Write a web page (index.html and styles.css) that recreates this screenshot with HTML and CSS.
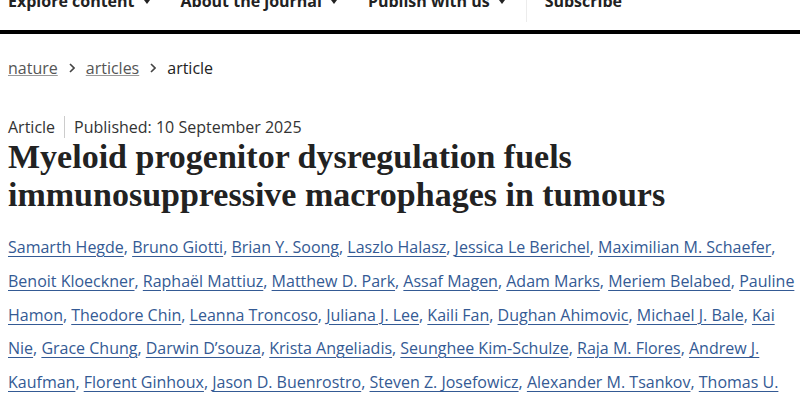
FILE: index.html
```html
<!DOCTYPE html>
<html lang="en">
<head>
    <meta charset="UTF-8">
    <meta name="viewport" content="width=device-width, initial-scale=1.0">
    <title>Myeloid progenitor dysregulation fuels immunosuppressive macrophages in tumours</title>
    <link rel="stylesheet" href="styles.css">
</head>
<body>
    <nav class="menu">
        <a class="menu-item" href="#">Explore content <span class="caret"></span></a>
        <a class="menu-item" href="#">About the journal <span class="caret"></span></a>
        <a class="menu-item" href="#">Publish with us <span class="caret"></span></a>
        <span class="menu-sep"></span>
        <a class="menu-item" href="#">Subscribe</a>
    </nav>

    <ol class="crumbs">
        <li><a href="#">nature</a></li>
        <li class="chev"><svg width="6" height="10" viewBox="0 0 6 10"><path d="M1 1l4 4-4 4" fill="none" stroke="#444" stroke-width="1.6"/></svg></li>
        <li><a href="#">articles</a></li>
        <li class="chev"><svg width="6" height="10" viewBox="0 0 6 10"><path d="M1 1l4 4-4 4" fill="none" stroke="#444" stroke-width="1.6"/></svg></li>
        <li class="current">article</li>
    </ol>

    <main class="article">
        <div class="meta">
            <span class="meta-type">Article</span>
            <span class="meta-date">Published: 10 September 2025</span>
        </div>
        <h1 class="title">Myeloid progenitor dysregulation fuels immunosuppressive macrophages in tumours</h1>

        <ul class="authors">
            <li><a href="#">Samarth Hegde</a>, </li>
            <li><a href="#">Bruno Giotti</a>, </li>
            <li><a href="#">Brian Y. Soong</a>, </li>
            <li><a href="#">Laszlo Halasz</a>, </li>
            <li><a href="#">Jessica Le Berichel</a>, </li>
            <li><a href="#">Maximilian M. Schaefer</a>, </li>
            <li><a href="#">Benoit Kloeckner</a>, </li>
            <li><a href="#">Raphaël Mattiuz</a>, </li>
            <li><a href="#">Matthew D. Park</a>, </li>
            <li><a href="#">Assaf Magen</a>, </li>
            <li><a href="#">Adam Marks</a>, </li>
            <li><a href="#">Meriem Belabed</a>, </li>
            <li><a href="#">Pauline Hamon</a>, </li>
            <li><a href="#">Theodore Chin</a>, </li>
            <li><a href="#">Leanna Troncoso</a>, </li>
            <li><a href="#">Juliana J. Lee</a>, </li>
            <li><a href="#">Kaili Fan</a>, </li>
            <li><a href="#">Dughan Ahimovic</a>, </li>
            <li><a href="#">Michael J. Bale</a>, </li>
            <li><a href="#">Kai Nie</a>, </li>
            <li><a href="#">Grace Chung</a>, </li>
            <li><a href="#">Darwin D’souza</a>, </li>
            <li><a href="#">Krista Angeliadis</a>, </li>
            <li><a href="#">Seunghee Kim-Schulze</a>, </li>
            <li><a href="#">Raja M. Flores</a>, </li>
            <li><a href="#">Andrew J. Kaufman</a>, </li>
            <li><a href="#">Florent Ginhoux</a>, </li>
            <li><a href="#">Jason D. Buenrostro</a>, </li>
            <li><a href="#">Steven Z. Josefowicz</a>, </li>
            <li><a href="#">Alexander M. Tsankov</a>, </li>
            <li><a href="#">Thomas U. Marron</a>, </li>
        </ul>
    </main>
</body>
</html>
```

FILE: styles.css
```css
body {
    margin: 0;
    padding: 0 8px;
    font-family: "Open Sans", Arial, sans-serif;
    color: #222;
    background: #fff;
}

a {
    color: inherit;
}

.menu {
    display: flex;
    align-items: flex-start;
    height: 40px;
    margin: -10px -8px 0;
    padding: 0 8px;
    border-bottom: 4px solid #000;
}

.menu-item {
    display: flex;
    align-items: center;
    gap: 9px;
    margin-right: 31px;
    font-size: 16px;
    font-weight: 700;
    line-height: 22px;
    color: #222;
    text-decoration: none;
}

.caret {
    width: 0;
    height: 0;
    margin-top: 2px;
    border-left: 3.5px solid transparent;
    border-right: 3.5px solid transparent;
    border-top: 4px solid #222;
}

.menu-sep {
    width: 1px;
    height: 32px;
    margin: 0 18px 0 -10px;
    background: #ececec;
}

.crumbs {
    display: flex;
    align-items: center;
    gap: 11px;
    list-style: none;
    margin: 0;
    padding: 22px 0 0;
    font-size: 16px;
    line-height: 24px;
}

.crumbs a {
    color: #555;
    text-decoration-color: #999;
}

.crumbs .chev {
    display: flex;
}

.crumbs .current {
    color: #222;
}

.article {
    padding-top: 36px;
}

.meta {
    display: flex;
    font-size: 16px;
    line-height: 22px;
    color: #333;
}

.meta-type {
    padding-right: 9px;
    margin-right: 9px;
    border-right: 1px solid #ccc;
}

.title {
    margin: 0;
    font-family: "Liberation Serif", "DejaVu Serif", serif;
    font-size: 34px;
    font-weight: 700;
    line-height: 38px;
    letter-spacing: 0;
    color: #222;
}

.authors {
    list-style: none;
    margin: 0 -8px 0 0;
    padding: 17px 0 0;
    font-size: 16px;
    line-height: 33.75px;
    color: #345a94;
}

.authors li {
    display: inline;
}

.authors a {
    text-underline-offset: 3px;
}
```
